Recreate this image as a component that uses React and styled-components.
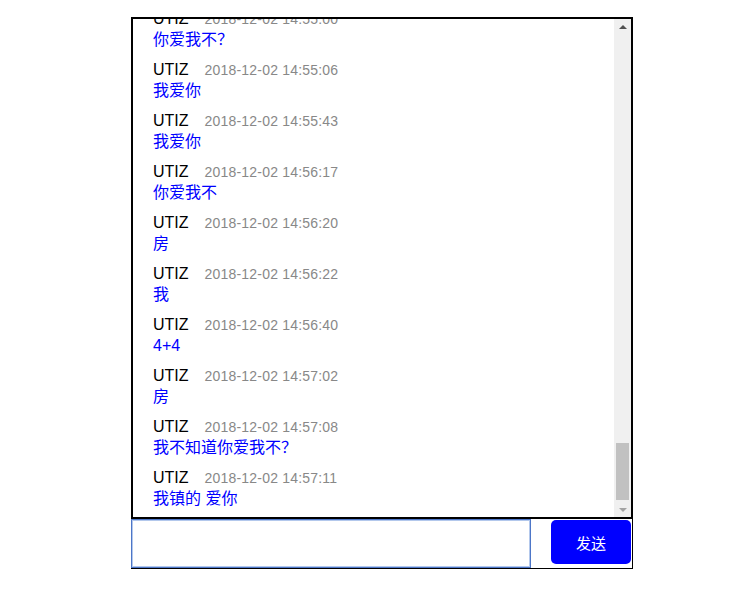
import React, { useLayoutEffect, useRef, useState } from 'react'
import styled, { createGlobalStyle } from 'styled-components'

const GlobalStyle = createGlobalStyle`
    html, body {
        margin: 0;
        padding: 0;
        background: #fff;
    }
    body {
        font-family: "Liberation Sans", Arial, "Noto Sans CJK SC", sans-serif;
    }
`

const recent = [
    ['14:55:00', '你爱我不？'],
    ['14:55:06', '我爱你'],
    ['14:55:43', '我爱你'],
    ['14:56:17', '你爱我不'],
    ['14:56:20', '房'],
    ['14:56:22', '我'],
    ['14:56:40', '4+4'],
    ['14:57:02', '房'],
    ['14:57:08', '我不知道你爱我不？'],
    ['14:57:11', '我镇的 爱你'],
]

const filler = ['你好', '在吗', '我爱你', '你爱我不', '哈哈', '房', '我', '好的']

const pad = n => String(n).padStart(2, '0')

const messages = [
    ...Array.from({ length: 70 }, (_, i) => {
        const m = 10 + Math.floor(i * 0.6)
        return {
            id: 'old' + i,
            name: 'UTIZ',
            time: `2018-12-02 14:${pad(m)}:${pad((i * 7) % 60)}`,
            text: filler[i % filler.length],
        }
    }),
    ...recent.map(([t, text], i) => ({
        id: 'new' + i,
        name: 'UTIZ',
        time: `2018-12-02 ${t}`,
        text,
    })),
]

const Page = styled.div`
    padding: 17px 0 0 131px;
`

const Chat = styled.div`
    width: 502px;
`

const MessageBox = styled.div`
    display: flex;
    box-sizing: border-box;
    height: 502px;
    border: 2px solid #000;
`

const MessageList = styled.div`
    flex: 1;
    min-width: 0;
    overflow-y: scroll;
    padding: 0 0 7px 20px;
    scrollbar-width: none;

    &::-webkit-scrollbar {
        display: none;
    }
`

const Rail = styled.div`
    display: flex;
    flex-direction: column;
    width: 17px;
    background: #f0f0f0;
`

const RailButton = styled.div`
    display: flex;
    align-items: center;
    justify-content: center;
    height: 17px;
    flex-shrink: 0;
`

const Arrow = styled.span`
    width: 0;
    height: 0;
    border-left: 4px solid transparent;
    border-right: 4px solid transparent;
    ${p => p.$down
        ? `border-top: 4px solid #a3a3a3; margin-top: 2px;`
        : `border-bottom: 4px solid #505050; margin-top: -2px;`}
`

const Track = styled.div`
    flex: 1;
    display: flex;
    flex-direction: column;
    padding: 0 2px;
`

const Thumb = styled.div`
    flex-shrink: 0;
    background: #c1c1c1;
`

const Message = styled.div`
    padding-top: 9px;
`

const Meta = styled.div`
    display: flex;
    align-items: baseline;
    height: 20px;
    line-height: 20px;
`

const Name = styled.span`
    font-size: 16px;
    color: #000;
`

const Time = styled.span`
    font-size: 14px;
    letter-spacing: 0.2px;
    color: #888;
    margin-left: 16px;
`

const Text = styled.div`
    font-size: 16px;
    line-height: 22px;
    height: 22px;
    color: #0000ff;
`

const Form = styled.form`
    display: flex;
    align-items: flex-start;
    justify-content: space-between;
    height: 50px;
    box-sizing: border-box;
    border: 1px solid #000;
    border-top: none;
    border-left: none;
`

const Input = styled.textarea`
    box-sizing: border-box;
    width: 400px;
    height: 49px;
    margin: 0;
    padding: 4px 2px;
    resize: none;
    border: 1px solid #4d76c8;
    box-shadow: inset 0 0 0 1px #b3c8ec;
    outline: none;
    caret-color: #000;
    font-family: "Liberation Sans", "Noto Sans CJK SC", sans-serif;
    font-size: 14px;
`

const SendButton = styled.button`
    width: 80px;
    height: 44px;
    margin: 1px 1px 0 0;
    border: none;
    border-radius: 5px;
    background: #0000ff;
    color: #fff;
    font-family: "Liberation Sans", "Noto Sans CJK SC", sans-serif;
    font-size: 15px;
    cursor: pointer;
`

export default function App() {
    const listRef = useRef(null)
    const trackRef = useRef(null)
    const inputRef = useRef(null)
    const [thumb, setThumb] = useState({ offset: 0, size: 0 })

    const measure = () => {
        const el = listRef.current
        const track = trackRef.current
        if (!el || !track) return
        const trackH = track.clientHeight
        const size = Math.max(17, trackH * el.clientHeight / el.scrollHeight)
        const range = el.scrollHeight - el.clientHeight
        const offset = range > 0 ? (trackH - size) * el.scrollTop / range : 0
        setThumb({ offset, size })
    }

    useLayoutEffect(() => {
        const el = listRef.current
        if (el) el.scrollTop = el.scrollHeight
        measure()
        if (inputRef.current) inputRef.current.focus()
    }, [])

    return (
        <Page>
            <GlobalStyle />
            <Chat>
                <MessageBox>
                    <MessageList ref={listRef} onScroll={measure}>
                        {messages.map(msg => (
                            <Message key={msg.id}>
                                <Meta>
                                    <Name>{msg.name}</Name>
                                    <Time>{msg.time}</Time>
                                </Meta>
                                <Text>{msg.text}</Text>
                            </Message>
                        ))}
                    </MessageList>
                    <Rail>
                        <RailButton><Arrow /></RailButton>
                        <Track ref={trackRef}>
                            <div style={{ height: thumb.offset, flexShrink: 0 }} />
                            <Thumb style={{ height: thumb.size }} />
                        </Track>
                        <RailButton><Arrow $down /></RailButton>
                    </Rail>
                </MessageBox>
                <Form onSubmit={e => e.preventDefault()}>
                    <Input ref={inputRef} />
                    <SendButton type="submit">发送</SendButton>
                </Form>
            </Chat>
        </Page>
    )
}
